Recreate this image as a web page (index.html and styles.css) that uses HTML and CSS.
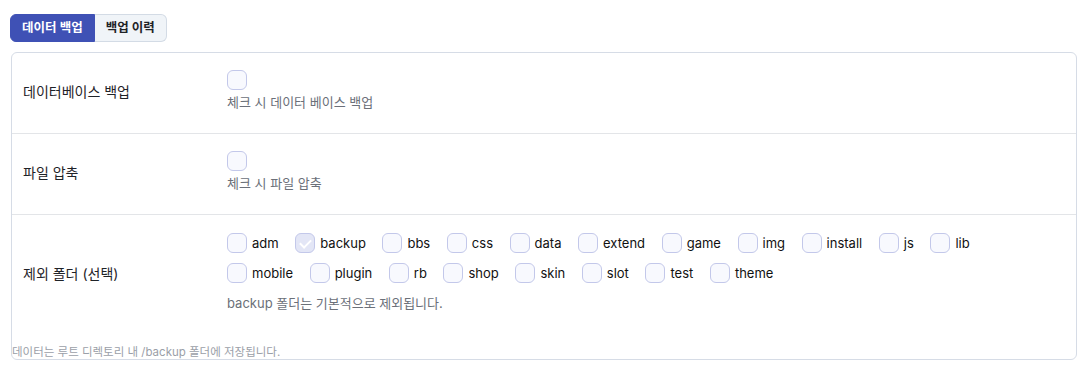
FILE: index.html
```html
<!DOCTYPE html>
<html lang="ko">
<head>
  <meta charset="UTF-8" />
  <title>데이터 백업</title>
  <link rel="stylesheet" href="styles.css">
</head>
<body>
  <div class="page">
    <div class="tabs">
      <a class="tab active" href="#">데이터 백업</a>
      <a class="tab" href="#">백업 이력</a>
    </div>

    <section class="card">
      <div class="row">
        <div class="label">데이터베이스 백업</div>
        <div class="control">
          <span class="box"></span>
          <p class="help">체크 시 데이터 베이스 백업</p>
        </div>
      </div>

      <div class="row">
        <div class="label">파일 압축</div>
        <div class="control">
          <span class="box"></span>
          <p class="help">체크 시 파일 압축</p>
        </div>
      </div>

      <div class="row last">
        <div class="label">제외 폴더 (선택)</div>
        <div class="control">
          <div class="folders">
            <label class="item"><span class="box"></span>adm</label>
            <label class="item"><span class="box checked"></span>backup</label>
            <label class="item"><span class="box"></span>bbs</label>
            <label class="item"><span class="box"></span>css</label>
            <label class="item"><span class="box"></span>data</label>
            <label class="item"><span class="box"></span>extend</label>
            <label class="item"><span class="box"></span>game</label>
            <label class="item"><span class="box"></span>img</label>
            <label class="item"><span class="box"></span>install</label>
            <label class="item"><span class="box"></span>js</label>
            <label class="item"><span class="box"></span>lib</label>
            <label class="item"><span class="box"></span>mobile</label>
            <label class="item"><span class="box"></span>plugin</label>
            <label class="item"><span class="box"></span>rb</label>
            <label class="item"><span class="box"></span>shop</label>
            <label class="item"><span class="box"></span>skin</label>
            <label class="item"><span class="box"></span>slot</label>
            <label class="item"><span class="box"></span>test</label>
            <label class="item"><span class="box"></span>theme</label>
          </div>
          <p class="help folder-help">backup 폴더는 기본적으로 제외됩니다.</p>
        </div>
      </div>

      <p class="note">데이터는 루트 디렉토리 내 /backup 폴더에 저장됩니다.</p>
    </section>
  </div>
</body>
</html>
```

FILE: styles.css
```css
* {
  margin: 0;
  padding: 0;
  box-sizing: border-box;
}

body {
  font-family: 'Inter', 'Noto Sans CJK KR', sans-serif;
  background: #fff;
  color: #1f2328;
  font-size: 13px;
}

.page {
  padding: 14px 11px 8px 10px;
}

.tabs {
  display: flex;
}

.tab {
  display: block;
  height: 28px;
  line-height: 26px;
  padding: 0 11px;
  font-size: 12.5px;
  font-weight: 600;
  text-decoration: none;
  color: #1f2328;
  background: #f0f4f8;
  border: 1px solid #d3dbe5;
}

.tab:first-child {
  border-radius: 6px 0 0 6px;
}

.tab:last-child {
  border-radius: 0 6px 6px 0;
  border-left: none;
}

.tab.active {
  background: #3f51b5;
  border-color: #3f51b5;
  color: #fff;
}

.card {
  margin: 10px 0 0 1px;
  border: 1px solid #d6dce6;
  border-radius: 6px;
}

.row {
  display: grid;
  grid-template-columns: 204px 1fr;
  align-items: center;
  padding: 17px 11px 21px;
  border-bottom: 1px solid #e3e5e8;
}

.row.last {
  border-bottom: none;
  padding-top: 18px;
  padding-bottom: 20px;
}

.label {
  font-size: 14px;
  color: #1f2328;
}

.box {
  display: block;
  width: 20px;
  height: 20px;
  border: 1px solid #c3c8ea;
  border-radius: 6px;
  background: #f8f9fe;
  flex-shrink: 0;
}

.box.checked {
  background: #e3e6f6;
  position: relative;
}

.box.checked::after {
  content: "";
  position: absolute;
  left: 6px;
  top: 3px;
  width: 5px;
  height: 9px;
  border: solid #fff;
  border-width: 0 2px 2px 0;
  transform: rotate(45deg);
}

.help {
  margin-top: 3px;
  font-size: 13px;
  line-height: 19px;
  color: #6b7079;
}

.folders {
  display: flex;
  flex-wrap: wrap;
  max-width: 790px;
  row-gap: 10px;
}

.item {
  display: flex;
  align-items: center;
  gap: 5px;
  margin-right: 16.6px;
  font-size: 13px;
  line-height: 20px;
  color: #111;
}

.folder-help {
  margin-top: 11px;
}

.note {
  margin-top: 12px;
  font-size: 11.5px;
  line-height: 14px;
  color: #9ba0a8;
}
```
